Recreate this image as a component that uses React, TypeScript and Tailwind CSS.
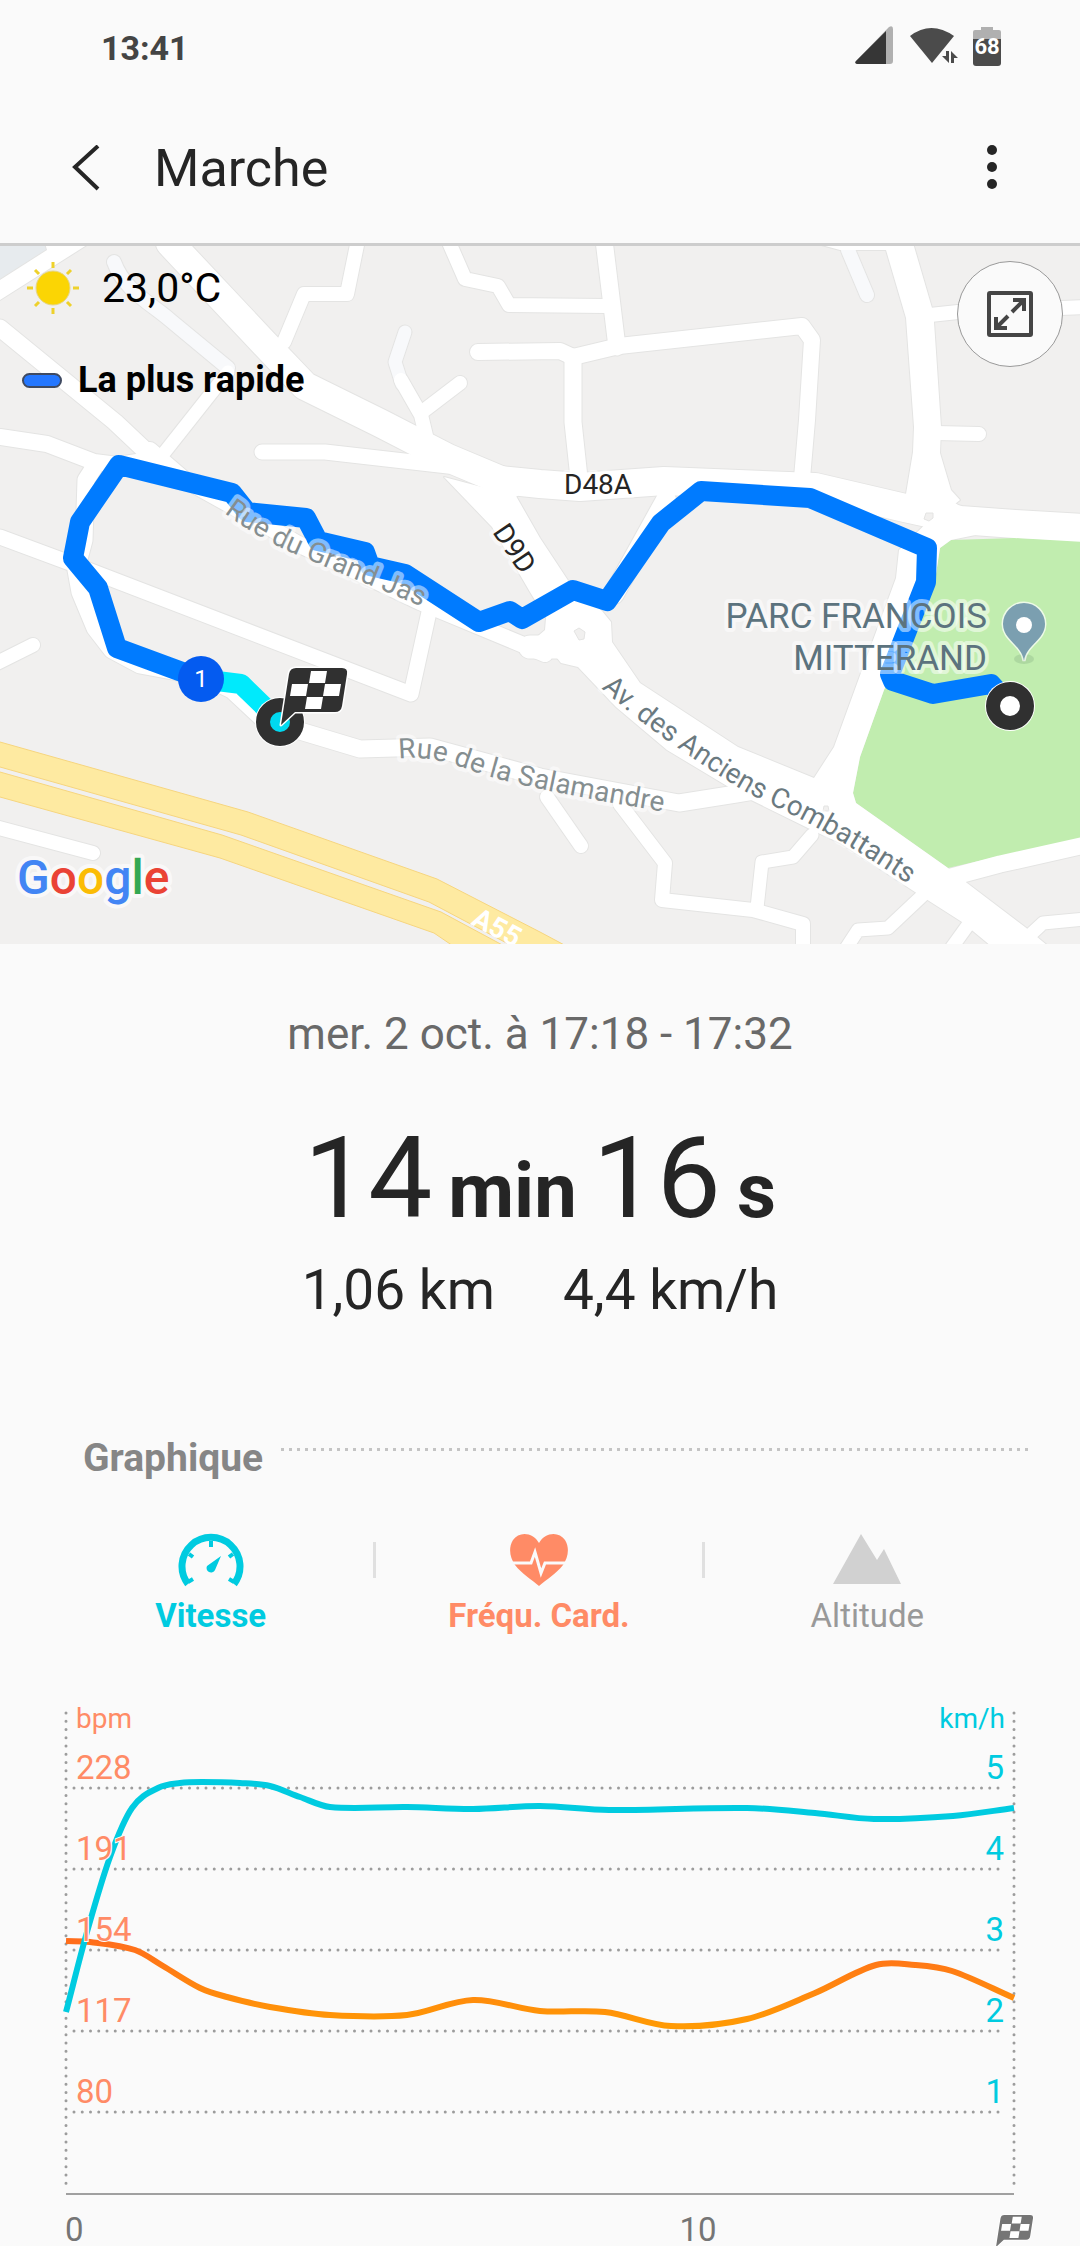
import React, { useState } from "react";
import clsx from "clsx";

type Point = [number, number];

type Road = {
  d: string;
  w: number;
  soft?: boolean;
};

// centre lines of the streets, in map units
const roads: Road[] = [
  { d: "M0 328 115 422 150 455", w: 17 },
  { d: "M150 450 185 480 230 505 300 545 420 602 545 654", w: 16 },
  { d: "M0 437 47 444 94 462 118 465 150 460", w: 16 },
  { d: "M114 262 C124 290 150 303 170 320 L228 368", w: 14, soft: true },
  { d: "M228 372 160 458", w: 13 },
  { d: "M170 243 263 342 305 386 380 423 448 458 510 484", w: 28 },
  { d: "M500 480 540 484 580 487 664 481 815 487 905 508 960 520 1015 524 1085 528", w: 28 },
  { d: "M358 240 347 294 304 294 284 342", w: 14 },
  { d: "M448 240 465 279 498 286 509 305 606 306", w: 14 },
  { d: "M604 240 617 347", w: 17 },
  { d: "M478 352 560 351 573 357 619 346 802 326 812 340 807 420 802 478", w: 16 },
  { d: "M573 357 573 422 579 478", w: 17 },
  { d: "M405 332 395 362 402 384", w: 13, soft: true },
  { d: "M401 380 421 415 427 440", w: 14 },
  { d: "M460 383 422 412", w: 14 },
  { d: "M262 452 325 452 448 466", w: 15 },
  { d: "M930 315 958 312 1085 307", w: 14 },
  { d: "M936 433 979 434", w: 14 },
  { d: "M848 250 867 295", w: 14, soft: true },
  { d: "M0 537 70 563 411 694 429 612", w: 15 },
  { d: "M95 466 86 480 84 540 76 570 80 592 95 628 112 650 140 665 205 677 232 690 262 718 300 731 360 749 430 747 489 763 540 777 679 803 736 794 760 790", w: 17 },
  { d: "M-5 664 33 645", w: 14 },
  { d: "M-5 827 93 853", w: 14 },
  { d: "M547 797 581 846", w: 14 },
  { d: "M620 804 665 863 662 900 753 910 803 924 803 950", w: 14 },
  { d: "M757 908 762 862 793 857 812 835", w: 13 },
  { d: "M922 896 888 928 858 930 845 950", w: 13 },
  { d: "M968 925 950 950", w: 13 },
  { d: "M1030 935 1043 923 1085 919", w: 13 },
  { d: "M1085 845 1000 864 940 880", w: 17 },
  { d: "M666 500 614 594", w: 20 },
  { d: "M530 647 560 647", w: 23 },
];

// wide junctions and avenues are outlined as areas
const areas = [
  "M444 477 492 527 530 592 546 618 545 630 538 636 538 658 557 658 561 663 578 667 616 707 667 750 747 798 812 830 840 843 915 892 962 922 991 946 1048 946 1025 927 967 883 948 868 856 803 853 793 860 757 884 690 934 587 940 548 951 540 1000 530 950 500 899 550 896 578 889 597 862 670 834 747 814 778 738 747 640 683 612 642 611 622 602 611 569 582 540 538 516 496 Z",
  "M886 243 886 250 906 318 914 427 913 452 905 500 935 520 960 500 951 490 940 453 941 427 934 322 932 308 913 243 Z",
  "M814 243 840 250 890 250 890 243 Z",
  "M0 280 47 250 45 243 90 243 0 300 Z",
];

const highway = [
  "M-4 741 0 742 248 812 437 879 540 932 570 948 516 948 429 902 241 835 0 767 -4 766 Z",
  "M-4 771 0 772 222 835 441 912 508 948 456 948 434 933 220 858 0 797 -4 796 Z",
];

const route =
  "M201 679 117 648 98 588 73 558 80 522 119 465 232 493 247 512 306 518 318 541 365 552 370 566 405 574 479 622 510 611 522 619 573 590 607 601 661 523 701 491 810 498 927 548 926 582 890 674 893 681 933 694 991 684 1010 705";

const speed: Point[] = [
  [66, 2012], [87, 1932], [110, 1857], [132, 1808], [158, 1788], [180, 1783],
  [202, 1782], [240, 1783], [270, 1786], [300, 1797], [330, 1807], [407, 1807],
  [473, 1809], [540, 1806], [609, 1810], [747, 1808], [815, 1813], [874, 1819],
  [953, 1816], [1014, 1808],
];

const heartRate: Point[] = [
  [66, 1941], [90, 1942], [135, 1950], [163, 1966], [200, 1988], [227, 1997],
  [270, 2007], [330, 2015], [407, 2015], [473, 2000], [540, 2011], [605, 2012],
  [671, 2026], [747, 2019], [815, 1993], [876, 1965], [915, 1965], [952, 1971],
  [1014, 1998],
];

const gridLines = [
  { y: 1788, bpm: 228, kmh: 5 },
  { y: 1869, bpm: 191, kmh: 4 },
  { y: 1950, bpm: 154, kmh: 3 },
  { y: 2031, bpm: 117, kmh: 2 },
  { y: 2112, bpm: 80, kmh: 1 },
];

const smoothPath = (points: Point[]) =>
  points.reduce((path, [x, y], i) => {
    if (i === 0) return `M${x} ${y}`;
    const [x0, y0] = points[i - 1];
    const [px, py] = points[i - 2] ?? points[i - 1];
    const [nx, ny] = points[i + 1] ?? points[i];
    const k0 = (x - x0) / (x - px) / 3;
    const k1 = (x - x0) / (nx - x0) / 3;
    const c1 = `${x0 + (x - px) * k0} ${y0 + (y - py) * k0}`;
    const c2 = `${x - (nx - x0) * k1} ${y - (ny - y0) * k1}`;
    return `${path} C${c1} ${c2} ${x} ${y}`;
  }, "");

// finish flag, its tip sits at 0,0
const Flag = ({ fill }: { fill: string }) => (
  <g>
    <path
      d="M0 0 14 -13H54Q60 -13 61 -19L66 -51Q67 -57 61 -57H15Q9 -57 8 -51Z"
      fill={fill}
      stroke="#fff"
      strokeWidth="3"
      strokeLinejoin="round"
      paintOrder="stroke"
    />
    <path
      d="M30 -54H46L44 -42H28ZM11 -41H27L25 -29H9ZM44 -41H60L58 -29H42ZM26 -28H42L40 -16H24Z"
      fill="#fff"
    />
  </g>
);

const StatusBar = () => (
  <div className="flex h-24 items-center justify-between pr-[78px] pl-[101px]">
    <span className="text-[34px] leading-10 font-bold text-[#444]">13:41</span>
    <svg viewBox="854 26 148 44" className="h-11 w-[148px]">
      <path d="M856 61 889 27Q893 25 893 29V61Q893 64 890 64H857Q854 63 856 61Z" fill="#b0b0b0" />
      <path d="M886 31V64H857Q854 63 856 61Z" fill="#363636" />
      <path d="M910 36Q931 20 954 36L932 63Z" fill="#4b4b4b" />
      <path
        d="M949 51V63L942 56H946V51ZM951 51 958 58H954V63H951Z"
        fill="#4b4b4b"
        stroke="#fafafa"
        strokeWidth="2"
        paintOrder="stroke"
      />
      <path d="M981 27H993V30H999Q1001 30 1001 32V40H973V32Q973 30 975 30H981Z" fill="#b0b0b0" />
      <path d="M973 39H1001V63Q1001 66 998 66H976Q973 66 973 63Z" fill="#4b4b4b" />
      <text x="987" y="54" textAnchor="middle" fill="#fff" className="text-[22px] font-bold">
        68
      </text>
    </svg>
  </div>
);

const Header = () => (
  <header className="flex h-[147px] items-center pr-[68px] pb-[2px] pl-[66px]">
    <button aria-label="Retour" className="flex h-16 w-[88px] items-center">
      <svg viewBox="0 0 40 48" className="h-12 w-10">
        <path d="M32 1 9 22 32 44" fill="none" stroke="#252525" strokeWidth="4" />
      </svg>
    </button>
    <h1 className="flex-1 text-[52px] leading-[60px] text-[#252525]">Marche</h1>
    <button aria-label="Plus d'options" className="flex h-16 w-10 items-center justify-center">
      <svg viewBox="0 0 12 48" className="h-12 w-3" fill="#252525">
        <circle cx="6" cy="5" r="5" />
        <circle cx="6" cy="22" r="5" />
        <circle cx="6" cy="39" r="5" />
      </svg>
    </button>
  </header>
);

const MapDrawing = () => (
  <svg viewBox="0 243 1080 701" className="block h-auto w-full">
    <defs>
      <path id="grand-jas" d="M224 513Q260 540 302 557L350 577 450 618" />
      <path id="salamandre" d="M399 759Q432 754 480 774 540 792 690 816" />
      <path id="anciens" d="M601 688Q641 723 671 743C711 771 741 791 776 807 831 833 871 859 941 906" />
    </defs>

    <rect y="243" width="1080" height="701" fill="#f1f0ef" />
    <path d="M0 243H46L47 250 0 279Z" fill="#e7ebee" />

    <g fill="none" stroke="#e4e4e3" strokeLinejoin="round" strokeLinecap="round">
      {roads.map((road) => (
        <path key={road.d} d={road.d} strokeWidth={road.w + 2} />
      ))}
      {areas.map((d) => (
        <path key={d} d={d} strokeWidth="2" />
      ))}
    </g>
    <path
      d="M951 540 1015 538 1085 541 1085 838 1005 855 948 868 856 803 853 793 860 757 884 690 934 587 940 548Z"
      fill="#c1edaf"
    />
    <g fill="none" strokeLinejoin="round" strokeLinecap="round">
      {roads
        .filter((road) => road.soft)
        .map((road) => (
          <path key={road.d} d={road.d} strokeWidth={road.w} stroke="#f8f9fb" />
        ))}
      {roads
        .filter((road) => !road.soft)
        .map((road) => (
          <path key={road.d} d={road.d} strokeWidth={road.w} stroke="#fff" />
        ))}
    </g>
    {areas.map((d) => (
      <path key={d} d={d} fill="#fff" />
    ))}
    <g fill="#f1f0ef" stroke="#e4e4e3">
      <path d="M926 513H933V518L929 521 924 519Z" />
      <path d="M574 631 579 628 585 632 584 639 579 640Z" />
      <path d="M824 806 828 806 829 811 823 811Z" />
    </g>

    {highway.map((d) => (
      <path key={d} d={d} fill="#feeaa1" stroke="#f6d57f" />
    ))}

    {/* walked route */}
    <g fill="none" strokeWidth="20" strokeLinejoin="round">
      <path d="M201 679 241 684 280 722" stroke="#00eafc" />
      <path d={route} stroke="#007bff" />
    </g>

    {/* labels */}
    <g strokeWidth="8" strokeLinejoin="round" stroke="#fff" strokeOpacity="0.5" paintOrder="stroke">
      <text className="text-[28px]" fill="#858e90">
        <textPath href="#grand-jas">Rue du Grand Jas</textPath>
      </text>
      <text className="text-[28px]" fill="#858e90">
        <textPath href="#salamandre">Rue de la Salamandre</textPath>
      </text>
      <text className="text-[28px]" fill="#6a797f">
        <textPath href="#anciens">Av. des Anciens Combattants</textPath>
      </text>
      <text textAnchor="end" className="text-[35px]" fill="#5c737e">
        <tspan x="987" y="628">PARC FRANCOIS</tspan>
        <tspan x="987" y="670">MITTERAND</tspan>
      </text>
      <text x="564" y="494" className="text-[28px]" fill="#252525">
        D48A
      </text>
      <text transform="translate(492 532) rotate(56)" className="text-[28px]" fill="#252525">
        D9D
      </text>
    </g>
    <text
      transform="translate(470 924) rotate(28)"
      className="text-[28px] font-bold"
      fill="#fff"
    >
      A55
    </text>

    {/* park pin */}
    <ellipse cx="1024" cy="659" rx="10" ry="5" fill="#8fb98a" opacity="0.4" />
    <path
      d="M1024 661C1022 645 1003 640 1003 624A21 21 0 0 1 1045 624C1045 640 1026 645 1024 661Z"
      fill="#7b9fb0"
      stroke="#fff"
      strokeWidth="3"
      strokeOpacity="0.7"
      paintOrder="stroke"
    />
    <circle cx="1024" cy="625" r="8" fill="#fff" />

    {/* first kilometre */}
    <circle cx="201" cy="679" r="23" fill="#045bf0" />
    <text x="201" y="687" textAnchor="middle" fill="#fff" className="text-[24px]">
      1
    </text>

    {/* start and finish */}
    <g fill="none" stroke="#303030">
      <circle cx="1010" cy="706" r="25" fill="#fff" stroke="none" />
      <circle cx="1010" cy="706" r="17" strokeWidth="14" />
      <circle cx="280" cy="722" r="25" fill="#fff" stroke="none" />
      <circle cx="280" cy="722" r="17" fill="#00d9f0" strokeWidth="14" />
    </g>
    <g transform="translate(281 725)">
      <Flag fill="#303030" />
    </g>

    <text
      x="17"
      y="894"
      className="text-[48px] font-medium"
      stroke="#fff"
      strokeWidth="8"
      strokeOpacity="0.6"
      strokeLinejoin="round"
      paintOrder="stroke"
    >
      <tspan fill="#4285f4">G</tspan>
      <tspan fill="#ea4335">o</tspan>
      <tspan fill="#fbbc05">o</tspan>
      <tspan fill="#4285f4">g</tspan>
      <tspan fill="#34a853">l</tspan>
      <tspan fill="#ea4335">e</tspan>
    </text>
  </svg>
);

const RouteMap = () => (
  <section className="relative">
    <MapDrawing />
    <div className="absolute inset-x-0 top-0 h-[3px] bg-[#cdcdcd]" />
    <div className="absolute top-[21px] left-[22px] flex flex-col gap-11 text-black">
      <div className="flex h-12 items-center gap-[18px]">
        <svg viewBox="-31 -26 62 52" className="h-[52px] w-[62px]">
          <circle r="17" fill="#fbd504" stroke="#e5d68a" />
          <g stroke="#eed12c" strokeWidth="3">
            <path d="M0 -26V-20M0 20V26M-26 0H-20M20 0H26M-18 -18-14 -14M14 14 18 18M18 -18 14 -14M-14 14-18 18" />
          </g>
        </svg>
        <span className="text-[41px] leading-[48px]">23,0°C</span>
      </div>
      <div className="flex h-12 items-center gap-4">
        <span className="h-[15px] w-10 rounded-full border-2 border-[#3f4a61] bg-[#2477ff]" />
        <span className="text-[36px] leading-[48px] font-bold">La plus rapide</span>
      </div>
    </div>
    <button
      aria-label="Agrandir la carte"
      className="absolute top-[18px] right-[17px] flex h-[106px] w-[106px] items-center justify-center rounded-full border border-[#999] bg-[#fafafa]"
    >
      <svg viewBox="0 0 46 46" className="h-[46px] w-[46px]" fill="none" stroke="#454545" strokeWidth="4">
        <rect x="2" y="2" width="42" height="42" rx="1" />
        <path d="M25 21 37 9M26 9H37V20M21 25 9 37M20 37H9V26" />
      </svg>
    </button>
  </section>
);

const Summary = () => (
  <section className="flex flex-col items-center pt-16 text-[#252525]">
    <p className="text-[44px] leading-[52px] text-[#696969]">mer. 2 oct. à 17:18 - 17:32</p>
    <p className="mt-[58px] flex items-baseline gap-4 text-[114px] leading-[120px]">
      14
      <span className="text-[76px] leading-none font-bold">min</span>
      16
      <span className="text-[76px] leading-none font-bold">s</span>
    </p>
    <div className="mt-5 flex gap-[68px] text-[55px] leading-[64px]">
      <span>1,06 km</span>
      <span>4,4 km/h</span>
    </div>
  </section>
);

const SpeedIcon = () => (
  <svg viewBox="0 0 66 54" className="h-[54px] w-[66px]" fill="none" stroke="#00cbe0">
    <path d="M10 51A29 29 0 1 1 56 51" strokeWidth="7" />
    <path d="M33 8V14M11 21 15 24M55 21 51 24M10 49 15 46M56 49 51 46" strokeWidth="4" />
    <path d="M43 23 37 37A4 4 0 1 1 29 33Z" fill="#00cbe0" stroke="none" />
  </svg>
);

const HeartIcon = () => (
  <svg viewBox="0 0 60 54" className="h-[54px] w-[60px]">
    <path
      d="M30 10C36 -1 50 -2 56 7 61 15 59 25 54 32 47 41 38 46 30 53 22 46 13 41 6 32 1 25 -1 15 4 7 10 -2 24 -1 30 10Z"
      fill="#ff8b66"
    />
    <path d="M3 30H22L26 19 32 40 36 30H57" fill="none" stroke="#fafafa" strokeWidth="3" />
  </svg>
);

const AltitudeIcon = () => (
  <svg viewBox="0 0 68 54" className="h-[54px] w-[68px]">
    <path d="M0 51 28 1 44 27 51 16 68 51Z" fill="#d1d1d1" />
  </svg>
);

const tabs = [
  { id: "speed", label: "Vitesse", icon: <SpeedIcon />, color: "text-[#00cbe0]" },
  { id: "heart", label: "Fréqu. Card.", icon: <HeartIcon />, color: "text-[#ff8b66]" },
  { id: "altitude", label: "Altitude", icon: <AltitudeIcon />, color: "text-[#999]" },
];

const Chart = ({ active }: { active: string[] }) => (
  <svg viewBox="0 1680 1080 566" className="mt-11 block h-auto w-full">
    <defs>
      <linearGradient id="bpm" gradientUnits="userSpaceOnUse" x1="0" y1="1940" x2="0" y2="2026">
        <stop offset="0" stopColor="#ff6d1c" />
        <stop offset="1" stopColor="#ff9a04" />
      </linearGradient>
    </defs>
    <g stroke="#9c9c9c" strokeWidth="3" strokeLinecap="round" strokeDasharray="0 8.25">
      <path d="M66 1713V2186" />
      <path d="M1014 1713V2186" />
      {gridLines.map(({ y }) => (
        <path key={y} d={`M74 ${y}H1002`} />
      ))}
    </g>
    <path d="M66 2194H1014" stroke="#a0a0a0" strokeWidth="2" />

    <g fill="none" strokeWidth="6">
      {active.includes("heart") && <path d={smoothPath(heartRate)} stroke="url(#bpm)" />}
      {active.includes("speed") && <path d={smoothPath(speed)} stroke="#00cbe0" />}
    </g>

    <g className="text-[33px]" stroke="#fafafa" strokeWidth="2" paintOrder="stroke">
      <g fill="#ff8b66">
        <text x="76" y="1728" className="text-[28px]">
          bpm
        </text>
        {gridLines.map(({ y, bpm }) => (
          <text key={bpm} x="76" y={y - 9}>
            {bpm}
          </text>
        ))}
      </g>
      <g fill="#00cbe0" textAnchor="end">
        <text x="1005" y="1728" className="text-[28px]">
          km/h
        </text>
        {gridLines.map(({ y, kmh }) => (
          <text key={kmh} x="1004" y={y - 9}>
            {kmh}
          </text>
        ))}
      </g>
      <g fill="#757575">
        <text x="65" y="2241">
          0
        </text>
        <text x="698" y="2241" textAnchor="middle">
          10
        </text>
      </g>
    </g>
    <g transform="translate(996 2247) scale(0.56)">
      <Flag fill="#757575" />
    </g>
  </svg>
);

const App = () => {
  const [active, setActive] = useState(["speed", "heart"]);

  const toggle = (id: string) =>
    setActive((ids) => (ids.includes(id) ? ids.filter((i) => i !== id) : [...ids, id]));

  return (
    <div className="min-h-screen overflow-hidden bg-[#fafafa] [font-family:Roboto,sans-serif]">
      <StatusBar />
      <Header />
      <main>
        <RouteMap />
        <Summary />
        <section className="mt-28">
          <div className="flex gap-[18px] pr-[50px] pl-[83px]">
            <h2 className="text-[39px] leading-[48px] font-bold text-[#868686]">Graphique</h2>
            <div className="mt-3.5 h-[3px] flex-1 bg-[repeating-linear-gradient(90deg,#c4c4c4_0_3px,transparent_3px_8px)]" />
          </div>
          <div className="mt-[51px] flex pr-[50px] pl-12">
            {tabs.map((tab, i) => (
              <React.Fragment key={tab.id}>
                {i > 0 && <div className="mt-[9px] h-9 w-[3px] bg-[#e0e0e0]" />}
                <button
                  aria-pressed={active.includes(tab.id)}
                  onClick={() => toggle(tab.id)}
                  className={clsx([
                    "flex flex-1 flex-col items-center gap-[9px] text-[33px] leading-10",
                    tab.color,
                    active.includes(tab.id) && "font-bold",
                  ])}
                >
                  {tab.icon}
                  {tab.label}
                </button>
              </React.Fragment>
            ))}
          </div>
          <Chart active={active} />
        </section>
      </main>
    </div>
  );
};

export default App;
